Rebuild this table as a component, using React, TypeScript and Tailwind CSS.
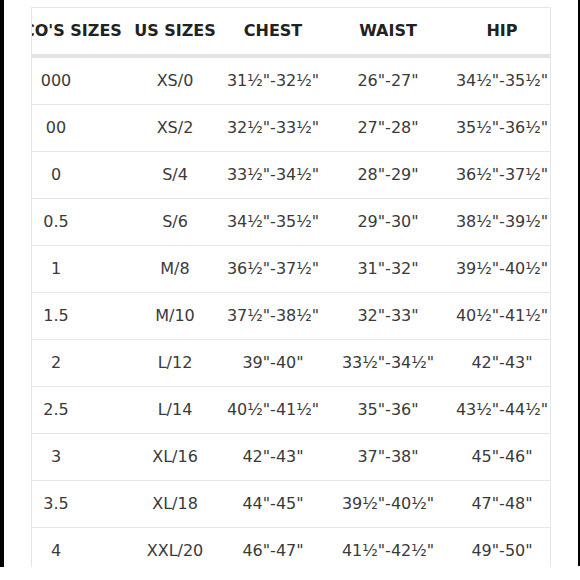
import React from "react";

interface SizeRow {
  size: string;
  us: string;
  chest: string;
  waist: string;
  hip: string;
}

const rows: SizeRow[] = [
  { size: "000", us: "XS/0", chest: "31½\"-32½\"", waist: "26\"-27\"", hip: "34½\"-35½\"" },
  { size: "00", us: "XS/2", chest: "32½\"-33½\"", waist: "27\"-28\"", hip: "35½\"-36½\"" },
  { size: "0", us: "S/4", chest: "33½\"-34½\"", waist: "28\"-29\"", hip: "36½\"-37½\"" },
  { size: "0.5", us: "S/6", chest: "34½\"-35½\"", waist: "29\"-30\"", hip: "38½\"-39½\"" },
  { size: "1", us: "M/8", chest: "36½\"-37½\"", waist: "31\"-32\"", hip: "39½\"-40½\"" },
  { size: "1.5", us: "M/10", chest: "37½\"-38½\"", waist: "32\"-33\"", hip: "40½\"-41½\"" },
  { size: "2", us: "L/12", chest: "39\"-40\"", waist: "33½\"-34½\"", hip: "42\"-43\"" },
  { size: "2.5", us: "L/14", chest: "40½\"-41½\"", waist: "35\"-36\"", hip: "43½\"-44½\"" },
  { size: "3", us: "XL/16", chest: "42\"-43\"", waist: "37\"-38\"", hip: "45\"-46\"" },
  { size: "3.5", us: "XL/18", chest: "44\"-45\"", waist: "39½\"-40½\"", hip: "47\"-48\"" },
  { size: "4", us: "XXL/20", chest: "46\"-47\"", waist: "41½\"-42½\"", hip: "49\"-50\"" },
];

// column widths, the table is wider than the visible crop
const cols = ["w-[116px]", "w-[122px]", "w-[74px]", "w-[156px]", "w-[72px]"];

const Cell: React.FC<{ w: string; children: React.ReactNode }> = ({ w, children }) => (
  <div className={`${w} shrink-0 flex justify-center`}>
    <span className="whitespace-nowrap">{children}</span>
  </div>
);

export default function App() {
  return (
    <div
      className="w-[580px] h-[580px] bg-white flex items-start overflow-hidden"
      style={{ fontFamily: '"DejaVu Sans", sans-serif' }}
    >
      <div className="w-[4px] h-[567px] bg-black shrink-0" />

      <div className="ml-[27px] mt-[7px] w-[520px] h-[560px] border border-b-0 border-[#e6e6e6] overflow-hidden shrink-0">
        {/* header */}
        <div className="h-[46px] flex items-center -ml-[34px] text-[16px] font-bold text-[#222]">
          <div className={`${cols[0]} shrink-0 flex justify-start pl-[25px]`}>
            <span className="whitespace-nowrap">CO'S SIZES</span>
          </div>
          <Cell w={cols[1]}>US SIZES</Cell>
          <Cell w={cols[2]}>CHEST</Cell>
          <Cell w={cols[3]}>WAIST</Cell>
          <Cell w={cols[4]}>HIP</Cell>
        </div>
        <div className="h-[4px] bg-[#e4e4e4]" />

        {rows.map((r, i) => (
          <div
            key={i}
            className="h-[47px] flex items-center -ml-[34px] border-b border-[#e6e6e6] text-[16px] text-[#3a3a3a]"
          >
            <Cell w={cols[0]}>{r.size}</Cell>
            <Cell w={cols[1]}>{r.us}</Cell>
            <Cell w={cols[2]}>{r.chest}</Cell>
            <Cell w={cols[3]}>{r.waist}</Cell>
            <Cell w={cols[4]}>{r.hip}</Cell>
          </div>
        ))}
      </div>

      <div className="ml-[27px] w-[2px] h-[566px] bg-black shrink-0" />
    </div>
  );
}
